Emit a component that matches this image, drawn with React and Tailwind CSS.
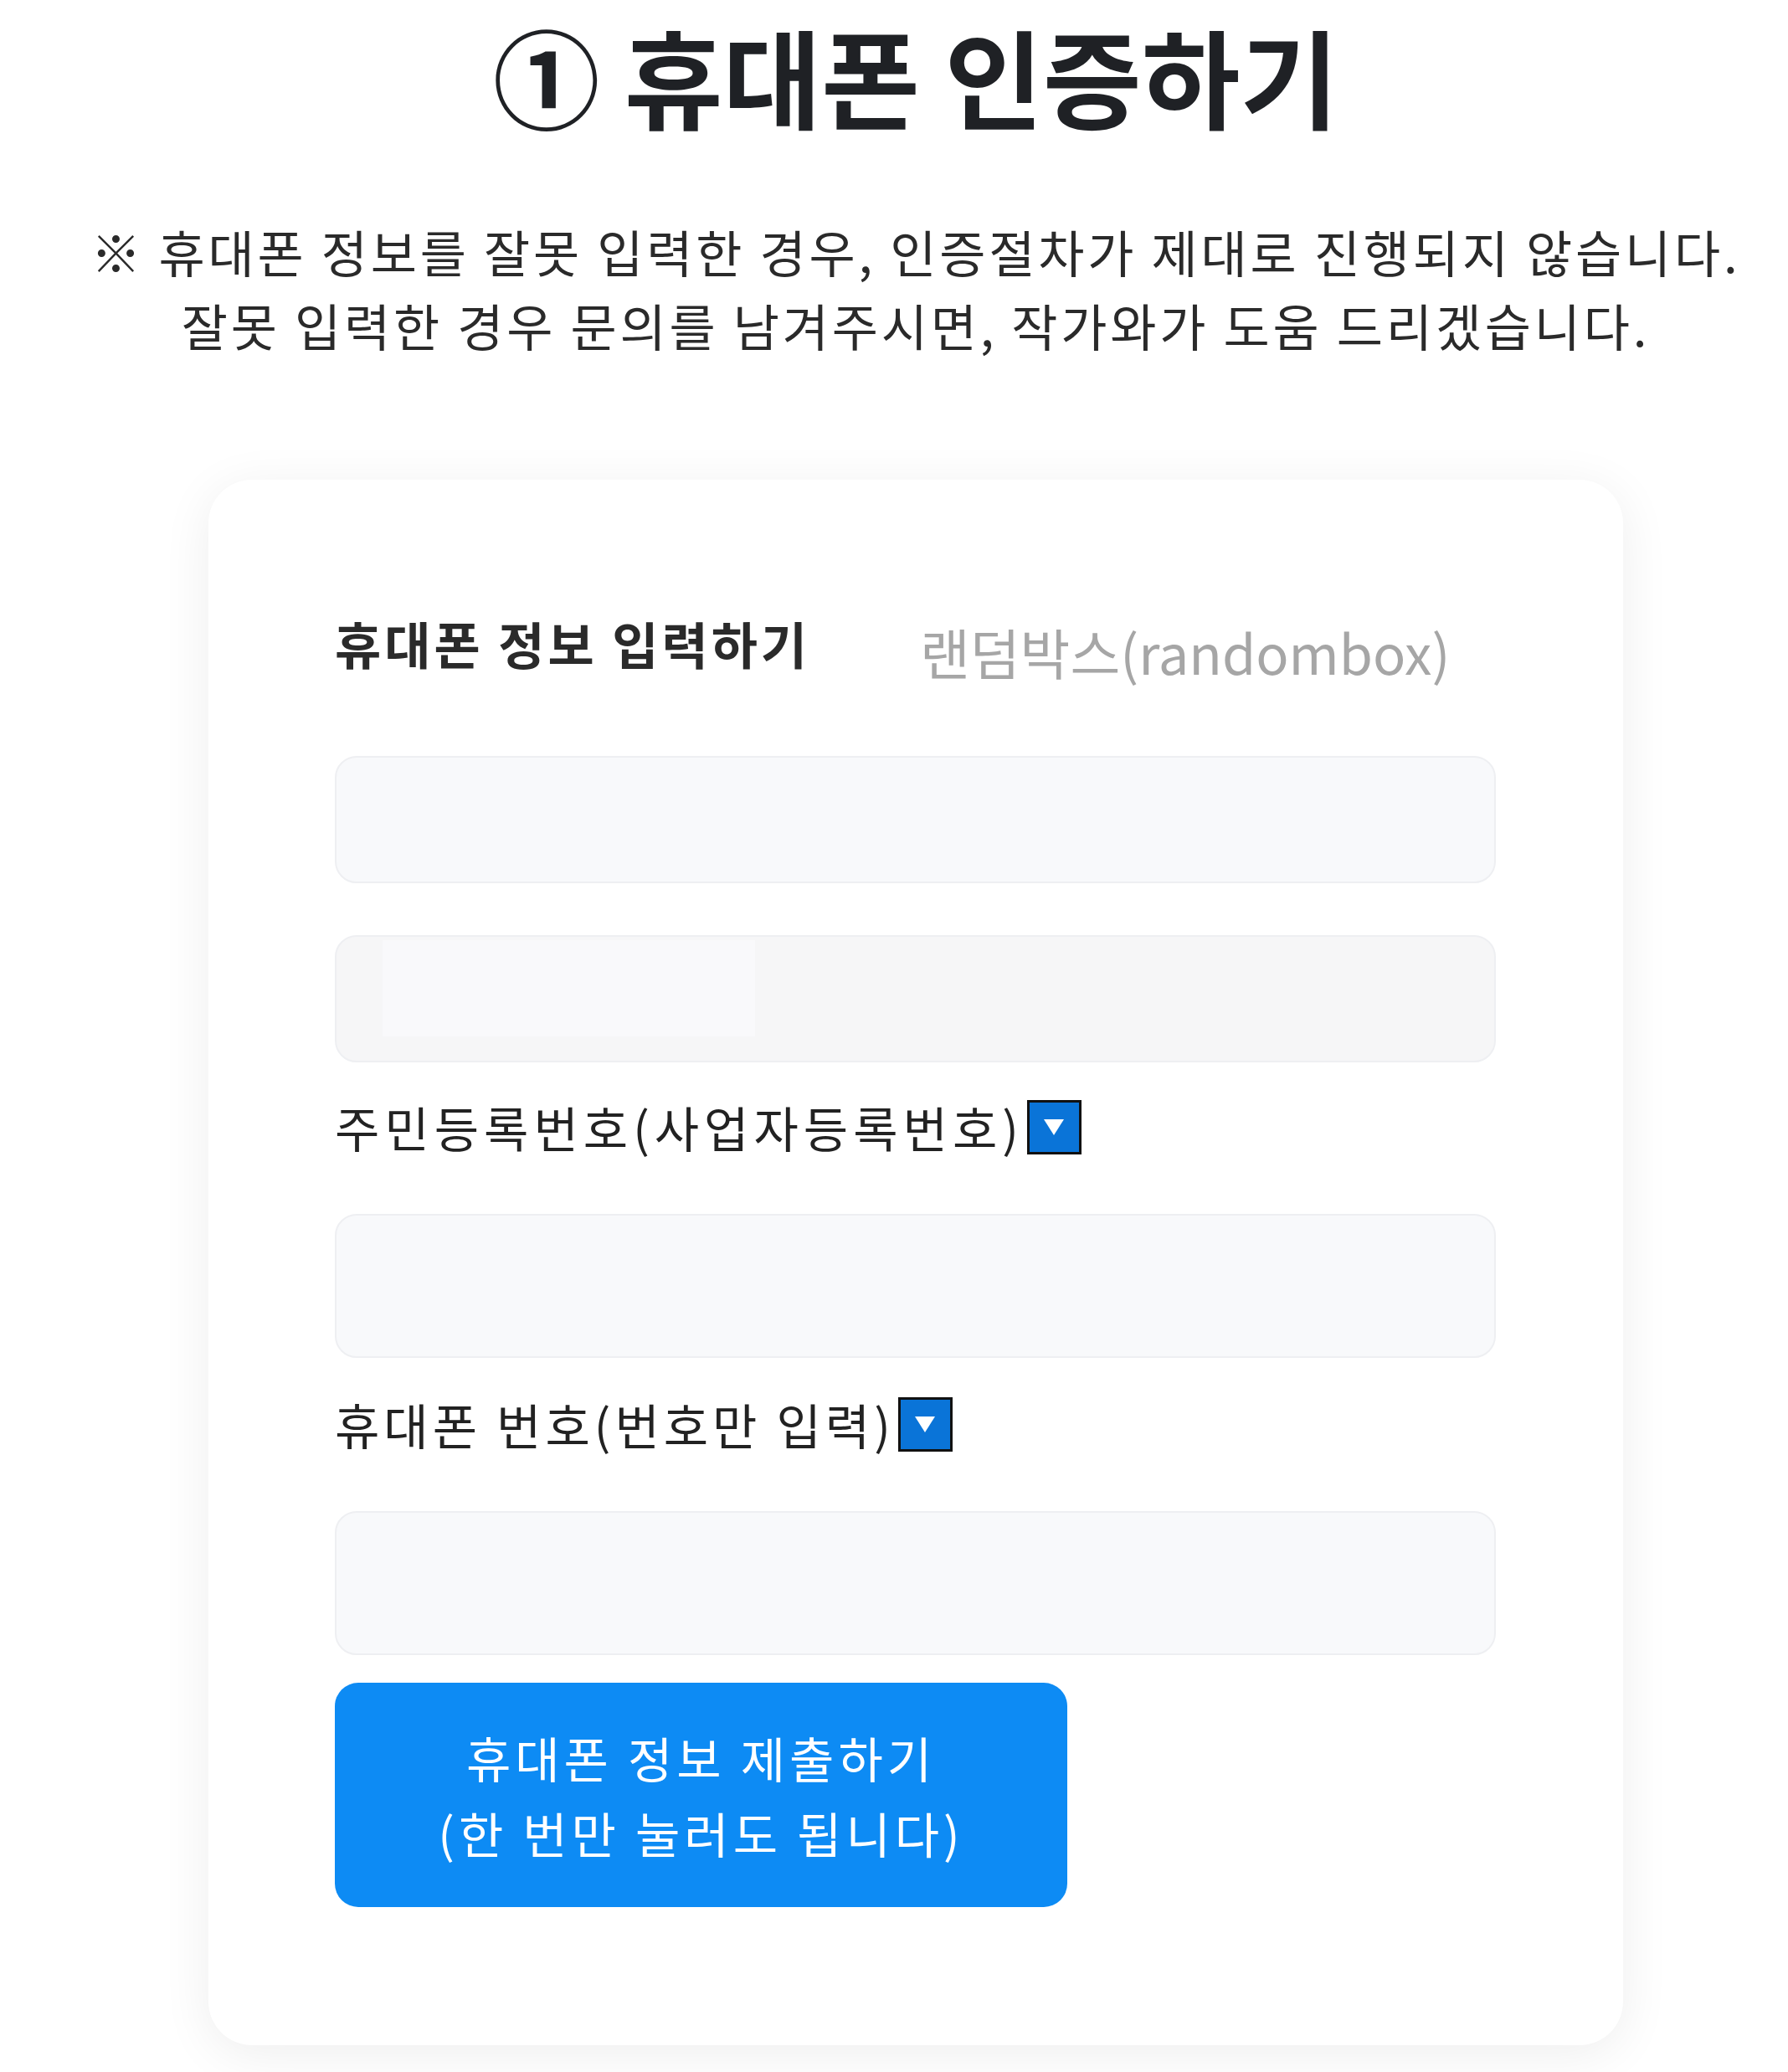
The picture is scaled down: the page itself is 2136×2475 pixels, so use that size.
import React from 'react';

const font = { fontFamily: '"Noto Sans CJK KR", "Noto Sans", sans-serif' };

function DownBox() {
  return (
    <span className="inline-flex w-[65px] h-[65px] ml-[4px] border-[3px] border-[#111] bg-[#0a74d8] items-center justify-center shrink-0">
      <svg width="28" height="24" viewBox="0 0 28 24">
        <polygon points="2,3 26,3 14,22" fill="#fff" />
      </svg>
    </span>
  );
}

function Field({ tall, children, gray }) {
  return (
    <div
      className={`w-[1387px] ${tall ? 'h-[172px]' : 'h-[152px]'} rounded-[26px] border-2 border-[#eeeff2] ${gray ? 'bg-[#f6f6f7]' : 'bg-[#f8f9fb]'} relative`}
    >
      {children}
    </div>
  );
}

export default function App() {
  return (
    <div className="min-h-[2475px] bg-white text-[#222] pl-[52px] flex flex-col items-center" style={font}>
      <h1 className="h-[180px] flex items-center text-[128px] font-bold leading-none text-[#1f2125]">
        ① 휴대폰 인증하기
      </h1>

      <p className="mt-[76px] text-center text-[60px] leading-[88px] tracking-[3.8px] text-[#2a2a2a]">
        ※ 휴대폰 정보를 잘못 입력한 경우, 인증절차가 제대로 진행되지 않습니다.
        <br />
        잘못 입력한 경우 문의를 남겨주시면, 작가와가 도움 드리겠습니다.
      </p>

      <div className="mt-[141px] w-[1690px] bg-white rounded-[52px] shadow-[0_10px_60px_rgba(0,0,0,0.07)] pl-[151px] pt-[157px] pb-[165px]">
        <div className="h-[80px] flex items-start">
          <span className="mt-[2px] text-[60px] leading-[72px] font-bold tracking-[4px] text-[#2a2a2a] w-[699px]">
            휴대폰 정보 입력하기
          </span>
          <span className="mt-[8px] text-[65px] leading-[80px] text-[#a6a6a6]">
            랜덤박스(randombox)
          </span>
        </div>

        <div className="mt-[93px]">
          <Field />
        </div>

        <div className="mt-[62px]">
          <Field gray>
            <div className="absolute left-[55px] top-[4px] w-[445px] h-[115px] bg-[#f9f9fb]" />
          </Field>
        </div>

        <div className="mt-[37px] h-[80px] flex items-center text-[58px] tracking-[6px]">
          <span>주민등록번호(사업자등록번호)</span>
          <DownBox />
        </div>

        <div className="mt-[64px]">
          <Field tall />
        </div>

        <div className="mt-[39px] h-[80px] flex items-center text-[58px] tracking-[5px]">
          <span>휴대폰 번호(번호만 입력)</span>
          <DownBox />
        </div>

        <div className="mt-[64px]">
          <Field tall />
        </div>

        <button className="mt-[33px] w-[875px] h-[268px] rounded-[28px] bg-[#0d8bf4] text-white text-[58px] leading-[90px] tracking-[5px] flex flex-col items-center justify-center">
          <span>휴대폰 정보 제출하기</span>
          <span>(한 번만 눌러도 됩니다)</span>
        </button>
      </div>
    </div>
  );
}
